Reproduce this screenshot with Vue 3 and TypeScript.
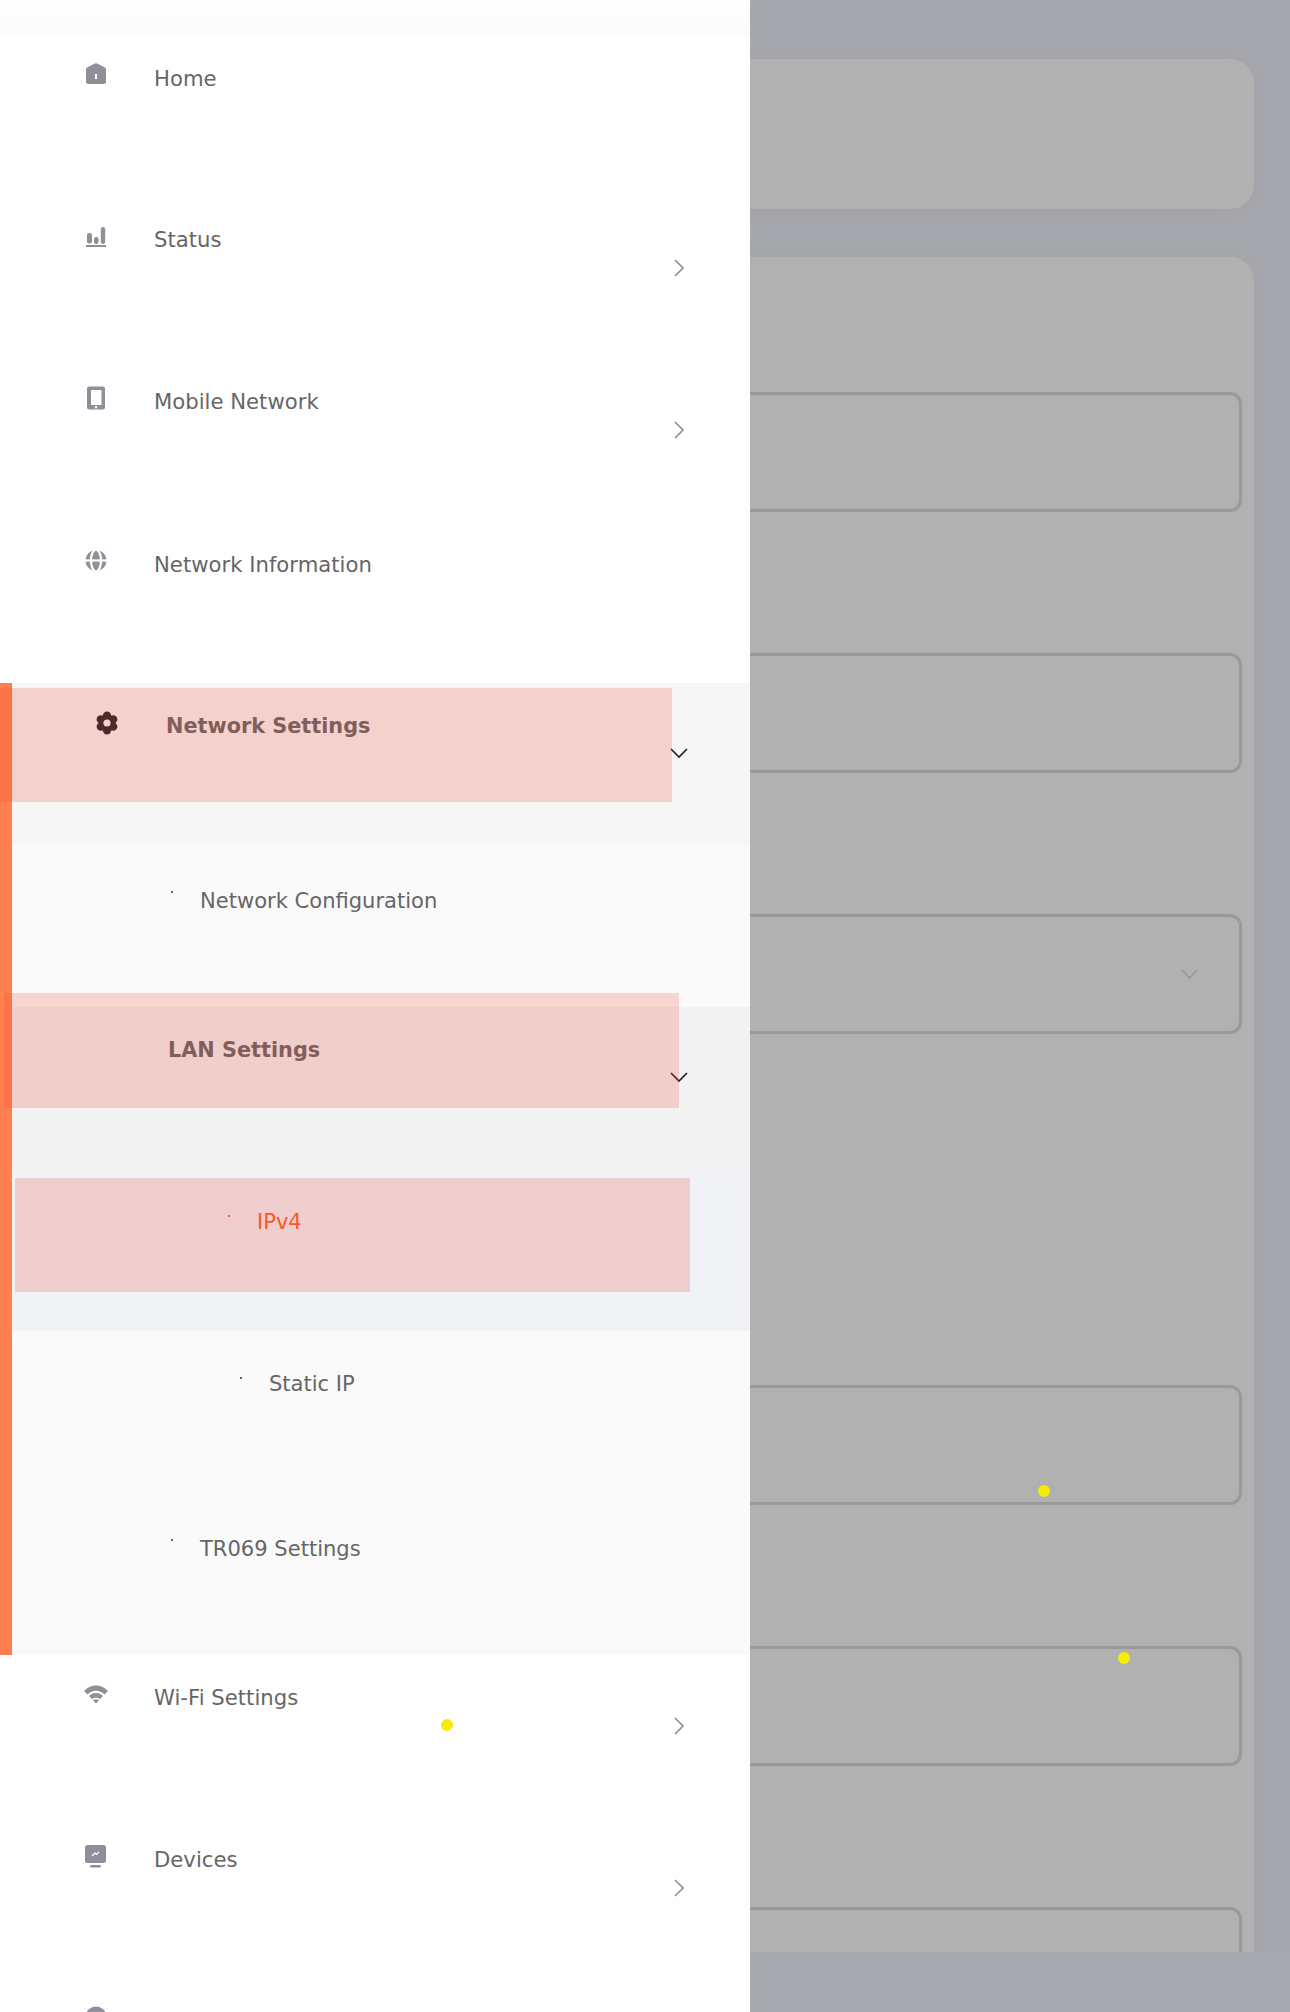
<script setup lang="ts">
// Boxes of the form behind the drawer
const fields = [
  { id: 1 },
  { id: 2 },
  { id: 3, select: true },
  { id: 4, spaced: true },
  { id: 5 },
  { id: 6 }
]
</script>

<template>
  <div class="page">
    <main class="content">
      <section class="card card-top" />
      <section class="card card-form">
        <div
          v-for="f in fields"
          :key="f.id"
          class="field"
          :class="{ spaced: f.spaced }"
        >
          <svg v-if="f.select" class="field-arrow" width="17" height="10" viewBox="0 0 17 10">
            <path d="M1 1l7.500 8L16 1" fill="none" stroke="#999" stroke-width="1.500" />
          </svg>
        </div>
      </section>
    </main>
    <footer class="footer" />

    <aside class="drawer">
      <div class="drawer-head" />

      <div class="row">
        <svg class="icon" viewBox="0 0 24 24">
          <path fill-rule="evenodd" d="M10.800 1.400a3 3 0 0 1 2.400 0l7.300 3.900c1 .5 1.500 1.400 1.500 2.500V20a2 2 0 0 1-2 2H4a2 2 0 0 1-2-2V7.800c0-1.100.5-2 1.500-2.500l7.300-3.900zM11 12v5h2v-5h-2z" />
        </svg>
        <span class="label label-low">Home</span>
      </div>

      <div class="row">
        <svg class="icon" viewBox="0 0 24 24">
          <rect x="3" y="9" width="5" height="10.500" rx="2.300" />
          <rect x="10" y="13" width="4.500" height="7" rx="2.200" />
          <rect x="16.800" y="3" width="4.400" height="17" rx="2.200" />
          <rect x="2" y="21" width="20" height="2" />
        </svg>
        <span class="label">Status</span>
        <svg class="chevron" viewBox="0 0 24 24"><path d="M8 4l8 8-8 8" /></svg>
      </div>

      <div class="row">
        <svg class="icon" viewBox="0 0 24 24">
          <path fill-rule="evenodd" d="M5 .5h14a2 2 0 0 1 2 2v19a2 2 0 0 1-2 2H5a2 2 0 0 1-2-2v-19a2 2 0 0 1 2-2zM7 4v15h10.500V4H7zm3.800 17.200a1.200 1.200 0 1 0 2.400 0 1.200 1.200 0 0 0-2.400 0z" />
        </svg>
        <span class="label">Mobile Network</span>
        <svg class="chevron" viewBox="0 0 24 24"><path d="M8 4l8 8-8 8" /></svg>
      </div>

      <div class="row">
        <svg class="icon" viewBox="0 0 24 24">
          <circle cx="12" cy="12.500" r="10.500" />
          <ellipse cx="12" cy="12.500" rx="5" ry="11" fill="none" stroke="#fff" stroke-width="2.300" />
          <path d="M1 12.500h22" stroke="#fff" stroke-width="2.200" />
        </svg>
        <span class="label label-low">Network Information</span>
      </div>

      <div class="group">
        <div class="row row-open">
          <svg class="icon icon-gear" viewBox="0 0 24 24">
            <circle cx="12" cy="12" r="8" />
            <circle cx="12" cy="4.800" r="4.200" />
            <circle cx="12" cy="19.200" r="4.200" />
            <circle cx="5.800" cy="8.400" r="4.200" />
            <circle cx="18.200" cy="8.400" r="4.200" />
            <circle cx="5.800" cy="15.600" r="4.200" />
            <circle cx="18.200" cy="15.600" r="4.200" />
            <circle cx="12" cy="12" r="3.600" fill="#f6f6f6" />
          </svg>
          <span class="label label-strong">Network Settings</span>
          <svg class="chevron chevron-down" viewBox="0 0 24 24"><path d="M4 8l8 8 8-8" /></svg>
          <span class="flash flash-a" />
        </div>

        <div class="row-sub level-1 sub-low">
          <i class="dot" />
          <span class="label">Network Configuration</span>
        </div>

        <div class="row row-lan">
          <span class="label label-strong">LAN Settings</span>
          <svg class="chevron chevron-down" viewBox="0 0 24 24"><path d="M4 8l8 8 8-8" /></svg>
          <span class="flash flash-b" />
        </div>

        <div class="row-sub level-2 row-current">
          <i class="dot" />
          <span class="label">IPv4</span>
          <span class="flash flash-c" />
        </div>

        <div class="row-sub level-3">
          <i class="dot" />
          <span class="label">Static IP</span>
        </div>

        <div class="row-sub level-1 sub-low">
          <i class="dot" />
          <span class="label">TR069 Settings</span>
        </div>
      </div>

      <div class="row">
        <svg class="icon" viewBox="0 0 24 24">
          <path d="M0 9C6 1.500 18 1.500 24 9l-3.500 3.500c-5-5-12-5-17 0L0 9z" />
          <path d="M5 14c4-4 10-4 14 0l-3 3c-2.500-2-5.500-2-8 0l-3-3z" />
          <path d="M9 18.200c2-1.200 4-1.200 6 0l-3 3.300-3-3.300z" />
        </svg>
        <span class="label">Wi-Fi Settings</span>
        <svg class="chevron" viewBox="0 0 24 24"><path d="M8 4l8 8-8 8" /></svg>
      </div>

      <div class="row">
        <svg class="icon" viewBox="0 0 24 24">
          <rect x="1" y="1" width="21" height="18" rx="2.500" />
          <rect x="6" y="21" width="11" height="2.500" rx="1.200" />
          <path d="M8 12l3-3 1.500 1.500L15 8" fill="none" stroke="#fff" stroke-width="1.200" />
        </svg>
        <span class="label">Devices</span>
        <svg class="chevron" viewBox="0 0 24 24"><path d="M8 4l8 8-8 8" /></svg>
      </div>

      <div class="row">
        <svg class="icon" viewBox="0 0 24 24"><circle cx="12" cy="11" r="10.500" /></svg>
      </div>
    </aside>

    <span class="touch touch-a" />
    <span class="touch touch-b" />
    <span class="touch touch-c" />
  </div>
</template>

<style>
body {
  margin: 0;
}
</style>

<style scoped>
.page {
  position: relative;
  width: 1290px;
  height: 2012px;
  overflow: hidden;
  display: flex;
  flex-direction: column;
  background: #a8a9ae;
  font-family: "DejaVu Sans", sans-serif;
}

.content {
  flex: 1 1 auto;
  min-height: 0;
  overflow: hidden;
  padding: 59px 36px 0;
  background: #a7a8ad;
}

.footer {
  flex: 0 0 60px;
  background: #a8a9ae;
}

.card {
  background: #b1b1b1;
  border-radius: 24px;
  box-shadow: 0 2px 30px rgba(0, 0, 0, 0.04);
}

.card-top {
  height: 150px;
  margin-bottom: 48px;
}

.card-form {
  display: flex;
  flex-direction: column;
  gap: 141px;
  padding: 135px 12px 60px;
}

.field {
  flex: 0 0 120px;
  box-sizing: border-box;
  border: 3px solid #999;
  border-radius: 12px;
  display: flex;
  align-items: center;
  justify-content: flex-end;
  padding-right: 41px;
}

.field.spaced {
  margin-top: 210px;
}

/* drawer lying over the page */
.drawer {
  position: absolute;
  top: 0;
  left: 0;
  bottom: 0;
  width: 750px;
  overflow: hidden;
  background: #fff;
}

.drawer-head {
  height: 35px;
  background: linear-gradient(#fff, #fafafa);
}

.row {
  position: relative;
  box-sizing: border-box;
  height: 162px;
  padding: 27px 59px 0 84px;
  display: flex;
  align-items: flex-start;
}

.icon {
  flex: 0 0 24px;
  width: 24px;
  height: 24px;
  margin-right: 46px;
  fill: #8e8f99;
}

.icon-gear {
  fill: #27242c;
}

.label {
  font-size: 21.2px;
  line-height: 32px;
  color: #666;
  white-space: nowrap;
}

.label-low {
  margin-top: 1px;
}

.label-strong {
  font-size: 20.8px;
  font-weight: 700;
}

.chevron {
  width: 24px;
  height: 24px;
  margin: 32px 0 0 auto;
  fill: none;
  stroke: #8e8f99;
  stroke-width: 1.7;
}

.chevron-down {
  stroke: #222;
}

.group {
  border-left: 12px solid #ff7f50;
}

.row-open {
  padding: 28px 59px 0 83px;
  background: #f6f6f6;
}

.row-open .label {
  line-height: 30px;
}

.row-open .chevron {
  margin-top: 30px;
}

.row-open .icon {
  margin-right: 47px;
}

.row-lan {
  padding-left: 156px;
  background: #f2f2f2;
}

.row-lan .label {
  line-height: 30px;
  margin-top: 1px;
}

.row-lan .chevron {
  margin-top: 31px;
}

.row-sub {
  position: relative;
  box-sizing: border-box;
  height: 162px;
  padding-top: 37px;
  display: flex;
  align-items: flex-start;
  background: #fafafa;
}

.row-sub .label {
  font-size: 21.05px;
}

.sub-low {
  padding-top: 40px;
}

.level-1 {
  padding-left: 159px;
}

.level-2 {
  padding-left: 216px;
}

.level-3 {
  padding-left: 228px;
}

.row-current {
  background: #f1f2f6;
}

.row-current .label {
  color: #ff5c26;
}

.row-current .dot {
  background: #ff5c26;
}

.dot {
  flex: 0 0 2px;
  width: 2px;
  height: 2px;
  margin: 9px 27px 0 0;
  background: #666;
}

.sub-low .dot {
  margin-top: 6px;
}

/* pressed highlights over the rows */
.flash {
  position: absolute;
  background: rgba(240, 65, 45, 0.2);
}

.flash-a {
  top: 5px;
  left: -12px;
  width: 672px;
  height: 114px;
}

.flash-b {
  top: -14px;
  left: -8px;
  width: 675px;
  height: 115px;
}

.flash-c {
  top: 9px;
  left: 3px;
  width: 675px;
  height: 114px;
}

.touch {
  position: absolute;
  width: 12px;
  height: 12px;
  border-radius: 50%;
  background: #f5ec00;
}

.touch-a {
  left: 441px;
  top: 1719px;
}

.touch-b {
  left: 1038px;
  top: 1485px;
}

.touch-c {
  left: 1118px;
  top: 1652px;
}
</style>
